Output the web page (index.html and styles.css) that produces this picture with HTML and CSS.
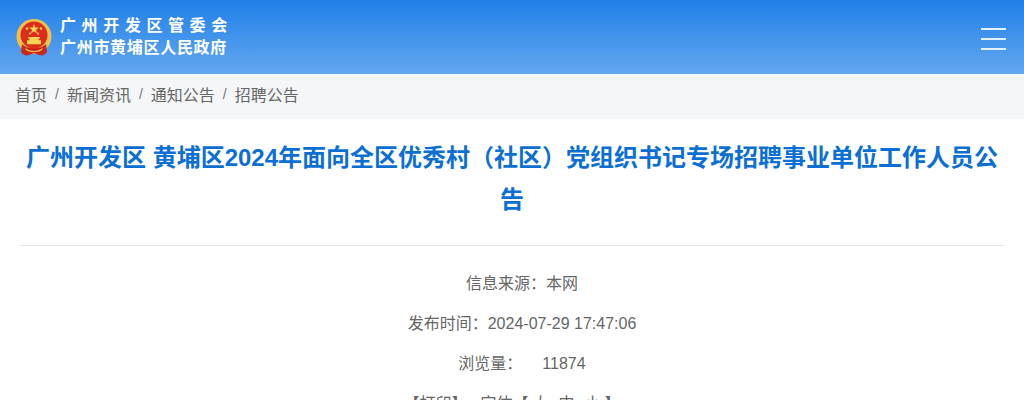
FILE: index.html
```html
<!DOCTYPE html>
<html lang="zh-CN">
<head>
  <meta charset="UTF-8" />
  <meta name="viewport" content="width=device-width, initial-scale=1.0" />
  <title>招聘公告</title>
  <link rel="stylesheet" href="styles.css">
</head>
<body>
  <header class="top">
    <div class="brand">
      <svg class="emblem" viewBox="0 0 36 38" width="36" height="38">
        <circle cx="18" cy="17.5" r="17.5" fill="#f2c14a"/>
        <circle cx="18" cy="16" r="13.5" fill="#dc2c1c"/>
        <polygon points="18,5 19.2,8.6 23,8.6 20,10.8 21.1,14.4 18,12.2 14.9,14.4 16,10.8 13,8.6 16.8,8.6" fill="#f7d453"/>
        <circle cx="11" cy="9.5" r="1.3" fill="#f7d453"/>
        <circle cx="25" cy="9.5" r="1.3" fill="#f7d453"/>
        <circle cx="14" cy="14.5" r="1" fill="#f7d453"/>
        <circle cx="22" cy="14.5" r="1" fill="#f7d453"/>
        <path d="M12 18h12v1.6h-1.4v1.6h2.4v4H11v-4h2.4v-1.6H12z" fill="#f7d453"/>
        <path d="M6 25c3 3 6 4 12 4s9-1 12-4l1 8c-2 3-5 4-8 3l-5-2-5 2c-3 1-6 0-8-3z" fill="#c9261c"/>
        <path d="M9 29c3 2 6 3 9 3s6-1 9-3l-1 2c-3 2-5 2-8 2s-5 0-8-2z" fill="#f2c14a"/>
      </svg>
      <div class="brand-text">
        <div class="brand-a">广州开发区管委会</div>
        <div class="brand-b">广州市黄埔区人民政府</div>
      </div>
    </div>
    <div class="menu-btn">
      <span></span>
      <span></span>
      <span></span>
    </div>
  </header>

  <nav class="crumb">
    <a>首页</a><i>/</i><a>新闻资讯</a><i>/</i><a>通知公告</a><i>/</i><a>招聘公告</a>
  </nav>

  <main class="article">
    <h1>广州开发区 黄埔区2024年面向全区优秀村（社区）党组织书记专场招聘事业单位工作人员公告</h1>
    <div class="meta">
      <p class="info">信息来源：本网</p>
      <p class="info">发布时间：2024-07-29 17:47:06</p>
      <p class="info">浏览量：<span class="views">11874</span></p>
      <p>【打印】<span class="font-label">字体</span>【<span class="size">大</span><span class="size">中</span><span class="size">小</span>】</p>
    </div>
  </main>
</body>
</html>
```

FILE: styles.css
```css
html, body {
  height: 400px;
  overflow: hidden;
}
body {
  margin: 0;
  font-family: 'Liberation Sans', 'Noto Sans CJK SC', sans-serif;
  background-color: #ffffff;
  color: #666666;
}
.top {
  display: flex;
  align-items: center;
  justify-content: space-between;
  height: 74px;
  padding: 0 18px 0 16px;
  box-sizing: border-box;
  background: linear-gradient(180deg, #1f7fe8 0%, #64a8f0 100%);
}
.brand {
  display: flex;
  align-items: center;
  gap: 8px;
}
.emblem {
  display: block;
  margin-top: 2px;
}
.brand-text {
  color: #ffffff;
  font-weight: bold;
  font-size: 16px;
  line-height: 22px;
}
.brand-a {
  letter-spacing: 5.6px;
}
.brand-b {
  letter-spacing: 0.7px;
}
.menu-btn {
  display: flex;
  flex-direction: column;
  gap: 8px;
  width: 25px;
  margin-top: 4px;
}
.menu-btn span {
  height: 2.3px;
  background-color: #e3f0fd;
}
.crumb {
  display: flex;
  align-items: center;
  height: 45px;
  padding: 0 15px 6px;
  box-sizing: border-box;
  background-color: #f4f6f8;
  font-size: 16px;
  color: #666666;
}
.crumb i {
  font-style: normal;
  margin: 0 8px;
  font-size: 14px;
  color: #777777;
}
.article {
  padding: 18px 20px 0;
}
h1 {
  margin: 0;
  padding-bottom: 24px;
  border-bottom: 1px solid #e4e6e8;
  font-size: 24px;
  line-height: 42px;
  text-align: center;
  color: #0b6fd3;
}
.meta {
  padding-top: 18px;
  text-align: center;
  font-size: 16px;
}
.meta p {
  margin: 0;
  line-height: 40px;
}
.meta .info {
  padding-left: 20px;
}
.views {
  margin-left: 20px;
}
.font-label {
  margin-left: 13px;
}
.size {
  margin: 0 4px;
}
.size + .size {
  margin-left: 6px;
}
```
